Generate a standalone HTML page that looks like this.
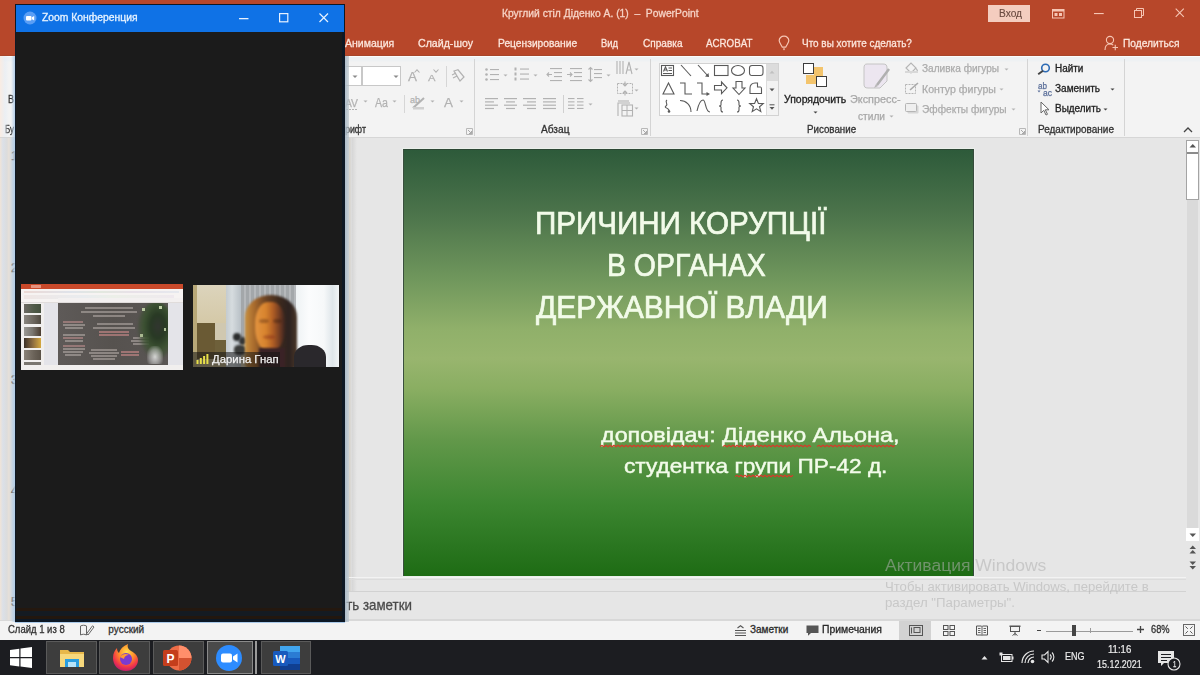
<!DOCTYPE html>
<html><head><meta charset="utf-8"><style>
*{margin:0;padding:0;box-sizing:border-box}
html,body{width:1200px;height:675px;overflow:hidden;background:#e6e6e6;font-family:"Liberation Sans",sans-serif;position:relative}
.a{position:absolute}
.t{position:absolute;white-space:pre;line-height:1;transform-origin:0 0}
svg{position:absolute;overflow:visible}
</style></head><body>
<div class="a" style="left:0;top:0;width:1200px;height:56px;background:#b7472a"></div>
<div class="a" style="left:0;top:55px;width:1200px;height:1px;background:#a8462a"></div>
<div class="a" style="left:0;top:56px;width:1200px;height:81px;background:linear-gradient(#fbfbfb 0,#fbfbfb 1px,#eef1f3 1px,#eef1f3 5px,#f3f3f3 6px)"></div>
<div class="a" style="left:0;top:137px;width:1200px;height:1px;background:#d6d6d6"></div>
<div class="a" style="left:402px;top:148px;width:573px;height:429px;background:#eaefea"></div>
<div class="a" style="left:403px;top:149px;width:571px;height:427px;border-top:1px solid #2c4634;border-right:1px solid #364a3c;border-left:1px solid #3a4e3e;background:linear-gradient(#2d5a3a 0%,#4c744b 15%,#6f965c 30%,#90b06a 42%,#98b56e 49%,#8aae62 56%,#62984a 68%,#3c8630 83%,#2a7620 93%,#1e6c14 100%)"></div>
<div class="a" style="left:349px;top:138px;width:8px;height:453px;background:linear-gradient(90deg,#dcd8d0 0,#d2cec6 1px,#e2e2e2 2px,#d6d6d6 3px,#e6e6e6 8px)"></div>
<div class="a" style="left:345px;top:577px;width:841px;height:1px;background:#f3f3f3"></div>
<div class="a" style="left:345px;top:579px;width:841px;height:1px;background:#dcdcdc"></div>
<div class="a" style="left:0;top:591px;width:1186px;height:1px;background:#d2d2d2"></div>
<div class="a" style="left:0;top:619px;width:1200px;height:2px;background:#d8d8d8"></div>
<div class="a" style="left:0;top:621px;width:1200px;height:19px;background:#f3f3f3"></div>
<div class="a" style="left:0;top:640px;width:1200px;height:35px;background:#1c1d21"></div>
<div class="t" style="left:501.60px;top:8.40px;font-size:11px;color:#f6d3c6;transform:scaleX(0.9358);-webkit-text-stroke:0.3px #f6d3c6;">Круглий стіл Діденко А. (1)  –  PowerPoint</div>
<div class="a" style="left:988px;top:5px;width:42px;height:17px;background:#f4cdbf"></div>
<div class="t" style="left:998.50px;top:8.15px;font-size:11px;color:#6a4a40;transform:scaleX(0.9252);-webkit-text-stroke:0.15px #6a4a40;">Вход</div>
<div class="t" style="left:344.70px;top:37.65px;font-size:11px;color:#fce6dc;transform:scaleX(0.9546);-webkit-text-stroke:0.3px #fce6dc;">Анимация</div>
<div class="t" style="left:418.00px;top:37.65px;font-size:11px;color:#fce6dc;transform:scaleX(0.9643);-webkit-text-stroke:0.3px #fce6dc;">Слайд-шоу</div>
<div class="t" style="left:497.50px;top:37.65px;font-size:11px;color:#fce6dc;transform:scaleX(0.9315);-webkit-text-stroke:0.3px #fce6dc;">Рецензирование</div>
<div class="t" style="left:601.40px;top:37.65px;font-size:11px;color:#fce6dc;transform:scaleX(0.8538);-webkit-text-stroke:0.3px #fce6dc;">Вид</div>
<div class="t" style="left:642.50px;top:37.65px;font-size:11px;color:#fce6dc;transform:scaleX(0.9149);-webkit-text-stroke:0.3px #fce6dc;">Справка</div>
<div class="t" style="left:706.00px;top:37.65px;font-size:11px;color:#fce6dc;transform:scaleX(0.8862);-webkit-text-stroke:0.3px #fce6dc;">ACROBAT</div>
<div class="t" style="left:801.70px;top:37.65px;font-size:11px;color:#fce6dc;transform:scaleX(0.9037);-webkit-text-stroke:0.3px #fce6dc;">Что вы хотите сделать?</div>
<div class="t" style="left:1122.60px;top:37.65px;font-size:11px;color:#fce6dc;transform:scaleX(0.9289);-webkit-text-stroke:0.3px #fce6dc;">Поделиться</div>
<div class="t" style="left:345.00px;top:125.00px;font-size:10px;color:#333;transform:scaleX(0.8842);-webkit-text-stroke:0.3px #333;">рифт</div>
<div class="t" style="left:541.00px;top:125.00px;font-size:10px;color:#333;transform:scaleX(1.0160);-webkit-text-stroke:0.3px #333;">Абзац</div>
<div class="t" style="left:806.60px;top:125.00px;font-size:10px;color:#333;transform:scaleX(0.9752);-webkit-text-stroke:0.3px #333;">Рисование</div>
<div class="t" style="left:1038.00px;top:125.00px;font-size:10px;color:#333;transform:scaleX(0.9974);-webkit-text-stroke:0.3px #333;">Редактирование</div>
<div class="t" style="left:5.00px;top:125.00px;font-size:10px;color:#333;transform:scaleX(0.7930);-webkit-text-stroke:0.3px #333;">Бу</div>
<div class="t" style="left:8.00px;top:95.00px;font-size:10px;color:#333;transform:scaleX(0.9023);-webkit-text-stroke:0.3px #333;">В</div>
<div class="t" style="left:784.20px;top:94.80px;font-size:10px;color:#222;transform:scaleX(1.0454);-webkit-text-stroke:0.3px #222;">Упорядочить</div>
<div class="t" style="left:850.00px;top:94.80px;font-size:10px;color:#a8a8a8;transform:scaleX(1.0849);-webkit-text-stroke:0.25px #a8a8a8;">Экспресс-</div>
<div class="t" style="left:858.00px;top:111.80px;font-size:10px;color:#a8a8a8;transform:scaleX(1.0150);-webkit-text-stroke:0.25px #a8a8a8;">стили</div>
<div class="t" style="left:922.40px;top:64.30px;font-size:10px;color:#ababab;transform:scaleX(1.0098);-webkit-text-stroke:0.25px #ababab;">Заливка фигуры</div>
<div class="t" style="left:922.40px;top:84.50px;font-size:10px;color:#ababab;transform:scaleX(1.0579);-webkit-text-stroke:0.25px #ababab;">Контур фигуры</div>
<div class="t" style="left:922.40px;top:104.50px;font-size:10px;color:#ababab;transform:scaleX(1.0150);-webkit-text-stroke:0.25px #ababab;">Эффекты фигуры</div>
<div class="t" style="left:1054.90px;top:63.90px;font-size:10px;color:#222;transform:scaleX(0.9947);-webkit-text-stroke:0.3px #222;">Найти</div>
<div class="t" style="left:1054.90px;top:84.40px;font-size:10px;color:#222;transform:scaleX(1.0033);-webkit-text-stroke:0.3px #222;">Заменить</div>
<div class="t" style="left:1054.90px;top:103.90px;font-size:10px;color:#222;transform:scaleX(0.9946);-webkit-text-stroke:0.3px #222;">Выделить</div>
<div class="t" style="left:534.50px;top:207.82px;font-size:31.5px;color:#f2fbe9;transform:scaleX(0.9390);-webkit-text-stroke:0.7px #f2fbe9;">ПРИЧИНИ КОРУПЦІЇ</div>
<div class="t" style="left:606.60px;top:249.62px;font-size:31.5px;color:#f2fbe9;transform:scaleX(0.9024);-webkit-text-stroke:0.7px #f2fbe9;">В ОРГАНАХ</div>
<div class="t" style="left:536.30px;top:291.73px;font-size:31.5px;color:#f2fbe9;transform:scaleX(0.9530);-webkit-text-stroke:0.7px #f2fbe9;">ДЕРЖАВНОЇ ВЛАДИ</div>
<div class="t" style="left:600.60px;top:425.25px;font-size:20.3px;color:#f2fbe9;transform:scaleX(1.1518);-webkit-text-stroke:0.45px #f2fbe9;">доповідач: Діденко Альона,</div>
<div class="t" style="left:623.70px;top:455.75px;font-size:20.3px;color:#f2fbe9;transform:scaleX(1.1160);-webkit-text-stroke:0.45px #f2fbe9;">студентка групи ПР-42 д.</div>
<svg style="left:600px;top:444.5px;" width="111" height="3" viewBox="0 0 111 3"><path d="M0 1.5 L2 0.3 L4 1.8 L6 0.3 L8 1.8 L10 0.3 L12 1.8 L14 0.3 L16 1.8 L18 0.3 L20 1.8 L22 0.3 L24 1.8 L26 0.3 L28 1.8 L30 0.3 L32 1.8 L34 0.3 L36 1.8 L38 0.3 L40 1.8 L42 0.3 L44 1.8 L46 0.3 L48 1.8 L50 0.3 L52 1.8 L54 0.3 L56 1.8 L58 0.3 L60 1.8 L62 0.3 L64 1.8 L66 0.3 L68 1.8 L70 0.3 L72 1.8 L74 0.3 L76 1.8 L78 0.3 L80 1.8 L82 0.3 L84 1.8 L86 0.3 L88 1.8 L90 0.3 L92 1.8 L94 0.3 L96 1.8 L98 0.3 L100 1.8 L102 0.3 L104 1.8 L106 0.3 L108 1.8 L110 0.3" fill="none" stroke="#d83a2a" stroke-width="1.1"/></svg>
<svg style="left:723px;top:444.5px;" width="90" height="3" viewBox="0 0 90 3"><path d="M0 1.5 L2 0.3 L4 1.8 L6 0.3 L8 1.8 L10 0.3 L12 1.8 L14 0.3 L16 1.8 L18 0.3 L20 1.8 L22 0.3 L24 1.8 L26 0.3 L28 1.8 L30 0.3 L32 1.8 L34 0.3 L36 1.8 L38 0.3 L40 1.8 L42 0.3 L44 1.8 L46 0.3 L48 1.8 L50 0.3 L52 1.8 L54 0.3 L56 1.8 L58 0.3 L60 1.8 L62 0.3 L64 1.8 L66 0.3 L68 1.8 L70 0.3 L72 1.8 L74 0.3 L76 1.8 L78 0.3 L80 1.8 L82 0.3 L84 1.8 L86 0.3 L88 1.8" fill="none" stroke="#d83a2a" stroke-width="1.1"/></svg>
<svg style="left:817px;top:444.5px;" width="79" height="3" viewBox="0 0 79 3"><path d="M0 1.5 L2 0.3 L4 1.8 L6 0.3 L8 1.8 L10 0.3 L12 1.8 L14 0.3 L16 1.8 L18 0.3 L20 1.8 L22 0.3 L24 1.8 L26 0.3 L28 1.8 L30 0.3 L32 1.8 L34 0.3 L36 1.8 L38 0.3 L40 1.8 L42 0.3 L44 1.8 L46 0.3 L48 1.8 L50 0.3 L52 1.8 L54 0.3 L56 1.8 L58 0.3 L60 1.8 L62 0.3 L64 1.8 L66 0.3 L68 1.8 L70 0.3 L72 1.8 L74 0.3 L76 1.8 L78 0.3" fill="none" stroke="#d83a2a" stroke-width="1.1"/></svg>
<svg style="left:735.4px;top:475px;" width="60.39999999999998" height="3" viewBox="0 0 60.39999999999998 3"><path d="M0 1.5 L2 0.3 L4 1.8 L6 0.3 L8 1.8 L10 0.3 L12 1.8 L14 0.3 L16 1.8 L18 0.3 L20 1.8 L22 0.3 L24 1.8 L26 0.3 L28 1.8 L30 0.3 L32 1.8 L34 0.3 L36 1.8 L38 0.3 L40 1.8 L42 0.3 L44 1.8 L46 0.3 L48 1.8 L50 0.3 L52 1.8 L54 0.3 L56 1.8 L58 0.3" fill="none" stroke="#d83a2a" stroke-width="1.1"/></svg>
<div class="t" style="left:191.50px;top:597.89px;font-size:14.6px;color:#4a4a4a;transform:scaleX(0.9124);-webkit-text-stroke:0.3px #4a4a4a;">Щелкните, чтобы добавить заметки</div>
<div class="t" style="left:885.00px;top:557.70px;font-size:16px;color:rgba(175,175,175,0.55);transform:scaleX(1.0940);">Активация Windows</div>
<div class="t" style="left:885.00px;top:580.54px;font-size:12.3px;color:rgba(175,175,175,0.55);transform:scaleX(1.0661);">Чтобы активировать Windows, перейдите в</div>
<div class="t" style="left:885.00px;top:597.04px;font-size:12.3px;color:rgba(175,175,175,0.55);transform:scaleX(1.0757);">раздел &quot;Параметры&quot;.</div>
<div class="t" style="left:7.50px;top:624.80px;font-size:10px;color:#333;transform:scaleX(0.9505);-webkit-text-stroke:0.3px #333;">Слайд 1 из 8</div>
<div class="t" style="left:108.30px;top:624.80px;font-size:10px;color:#333;-webkit-text-stroke:0.3px #333;">русский</div>
<div class="t" style="left:750.00px;top:624.80px;font-size:10px;color:#2a2a2a;-webkit-text-stroke:0.3px #2a2a2a;">Заметки</div>
<div class="t" style="left:821.70px;top:624.80px;font-size:10px;color:#2a2a2a;transform:scaleX(1.0390);-webkit-text-stroke:0.3px #2a2a2a;">Примечания</div>
<div class="t" style="left:1151.40px;top:624.80px;font-size:10px;color:#333;transform:scaleX(0.9300);-webkit-text-stroke:0.3px #333;">68%</div>
<div class="t" style="left:1064.50px;top:651.06px;font-size:11.4px;color:#ececec;transform:scaleX(0.7901);-webkit-text-stroke:0.2px #ececec;">ENG</div>
<div class="t" style="left:1107.60px;top:643.55px;font-size:11px;color:#ececec;transform:scaleX(0.8717);-webkit-text-stroke:0.2px #ececec;">11:16</div>
<div class="t" style="left:1097.00px;top:658.91px;font-size:11.4px;color:#ececec;transform:scaleX(0.7852);-webkit-text-stroke:0.2px #ececec;">15.12.2021</div>
<div class="a" style="left:0;top:138px;width:15px;height:482px;background:linear-gradient(90deg,#f0e4d8 0,#dbe0e8 3px,#dcdcdc 7px,#e8e0d8 9px,#dcdcdc 10px,#d0d8e0 12px)"></div>
<div class="a" style="left:0;top:56px;width:15px;height:81px;background:linear-gradient(90deg,rgba(250,235,225,0.9) 0,rgba(230,236,244,0.6) 5px,rgba(243,243,243,0) 9px)"></div>
<div class="t" style="left:11.00px;top:149.80px;font-size:12px;color:#666;-webkit-text-stroke:0.25px #666;">1</div>
<div class="t" style="left:11.00px;top:261.80px;font-size:12px;color:#666;-webkit-text-stroke:0.25px #666;">2</div>
<div class="t" style="left:11.00px;top:373.80px;font-size:12px;color:#666;-webkit-text-stroke:0.25px #666;">3</div>
<div class="t" style="left:11.00px;top:484.80px;font-size:12px;color:#666;-webkit-text-stroke:0.25px #666;">4</div>
<div class="t" style="left:11.00px;top:595.80px;font-size:12px;color:#666;-webkit-text-stroke:0.25px #666;">5</div>
<svg style="left:1052px;top:9px;" width="13" height="10" viewBox="0 0 13 10"><rect x="0.5" y="0.5" width="11.5" height="8.5" fill="none" stroke="#f6c6b4" stroke-width="1"/><rect x="0.5" y="0.5" width="11.5" height="2" fill="#f6c6b4"/><rect x="2.5" y="4" width="3" height="3" fill="#f6c6b4"/><rect x="7" y="4" width="3" height="3" fill="#f6c6b4"/></svg>
<svg style="left:1094px;top:13px;" width="10" height="2" viewBox="0 0 10 2"><rect x="0" y="0" width="9.7" height="1.1" fill="#f6c6b4"/></svg>
<svg style="left:1134px;top:8px;" width="11" height="11" viewBox="0 0 11 11"><rect x="0.5" y="2.5" width="7" height="7" fill="none" stroke="#f6c6b4" stroke-width="1"/><path d="M2.5 2.5 V0.5 H9.5 V7.5 H7.5" fill="none" stroke="#f6c6b4" stroke-width="1"/></svg>
<svg style="left:1175px;top:8px;" width="10" height="10" viewBox="0 0 10 10"><path d="M0.7 0.7 L8.8 8.8 M8.8 0.7 L0.7 8.8" stroke="#f6c6b4" stroke-width="1.1"/></svg>
<svg style="left:778px;top:35px;" width="12" height="16" viewBox="0 0 12 16"><path d="M6 1.2 C3.2 1.2 1.2 3.2 1.2 5.6 C1.2 7.6 2.6 9 3.8 11.2 L4.3 12.2 H7.7 L8.2 11.2 C9.4 9 10.8 7.6 10.8 5.6 C10.8 3.2 8.8 1.2 6 1.2Z" fill="none" stroke="#f6c6b4" stroke-width="1.2"/><circle cx="6" cy="14.2" r="1.1" fill="#f6c6b4" opacity="0.7"/></svg>
<svg style="left:1104px;top:35px;" width="15" height="16" viewBox="0 0 15 16"><circle cx="6" cy="5" r="3.6" fill="none" stroke="#f6c6b4" stroke-width="1.1"/><path d="M1 15 C1 11 3 9 6 9 C7.5 9 8.5 9.5 9.2 10.2" fill="none" stroke="#f6c6b4" stroke-width="1.1"/><path d="M8.5 12.5 H14 M11.25 9.8 V15.2" stroke="#f6c6b4" stroke-width="1.1"/></svg>
<div class="a" style="left:338px;top:66px;width:24px;height:20px;background:#fff;border:1px solid #c8c8c8;border-left:none"></div>
<div class="a" style="left:362px;top:66px;width:39px;height:20px;background:#fff;border:1px solid #c8c8c8"></div>
<svg style="left:352px;top:75px;" width="7" height="4" viewBox="0 0 7 4"><path d="M0.5 0.5 H5.5 L3 3Z" fill="#8a8a8a"/></svg>
<svg style="left:393px;top:75px;" width="7" height="4" viewBox="0 0 7 4"><path d="M0.5 0.5 H5.5 L3 3Z" fill="#8a8a8a"/></svg>
<div class="t" style="left:408.00px;top:70.80px;font-size:12px;color:#b2b2b2;transform:scaleX(1.1194);-webkit-text-stroke:0.25px #b2b2b2;">A</div>
<svg style="left:414px;top:69px;" width="6" height="4" viewBox="0 0 6 4"><path d="M0.5 3.5 L3 0.8 L5.5 3.5" fill="none" stroke="#b2b2b2" stroke-width="1.1"/></svg>
<div class="t" style="left:428.00px;top:72.92px;font-size:9.5px;color:#b2b2b2;transform:scaleX(1.1783);-webkit-text-stroke:0.25px #b2b2b2;">A</div>
<svg style="left:433px;top:69px;" width="6" height="4" viewBox="0 0 6 4"><path d="M0.5 0.5 L3 3.2 L5.5 0.5" fill="none" stroke="#b2b2b2" stroke-width="1.1"/></svg>
<div class="a" style="left:446px;top:66px;width:1px;height:21px;background:#d6d6d6"></div>
<svg style="left:451px;top:69px;" width="15" height="14" viewBox="0 0 15 14"><path d="M3 2 L7 0.8 L13 8 L9 12 Z" fill="none" stroke="#b2b2b2" stroke-width="1.2"/><path d="M1 6 L5 4 M2 9 L6 7" stroke="#b2b2b2" stroke-width="1.2"/></svg>
<div class="t" style="left:345.00px;top:97.65px;font-size:11px;color:#b2b2b2;transform:scaleX(0.9380);-webkit-text-stroke:0.25px #b2b2b2;">AV</div>
<svg style="left:346px;top:108px;" width="12" height="3" viewBox="0 0 12 3"><path d="M0 1.5 H11" stroke="#b2b2b2" stroke-width="1" stroke-dasharray="2 1"/></svg>
<svg style="left:363px;top:100px;" width="6" height="4" viewBox="0 0 6 4"><path d="M0.5 0.5 H4.5 L2.5 2.5Z" fill="#b2b2b2"/></svg>
<div class="t" style="left:375.00px;top:96.80px;font-size:12px;color:#b2b2b2;transform:scaleX(0.8844);-webkit-text-stroke:0.25px #b2b2b2;">Aa</div>
<svg style="left:392px;top:100px;" width="6" height="4" viewBox="0 0 6 4"><path d="M0.5 0.5 H4.5 L2.5 2.5Z" fill="#b2b2b2"/></svg>
<div class="a" style="left:404px;top:95px;width:1px;height:18px;background:#d6d6d6"></div>
<div class="t" style="left:410.00px;top:96.35px;font-size:9px;color:#b2b2b2;-webkit-text-stroke:0.25px #b2b2b2;">ab</div>
<svg style="left:410px;top:96px;" width="16" height="14" viewBox="0 0 16 14"><path d="M3 12 L14 2" stroke="#b2b2b2" stroke-width="2"/><rect x="3" y="11" width="11" height="2.5" fill="#d0d0d0"/></svg>
<svg style="left:430px;top:100px;" width="6" height="4" viewBox="0 0 6 4"><path d="M0.5 0.5 H4.5 L2.5 2.5Z" fill="#b2b2b2"/></svg>
<div class="t" style="left:444.00px;top:95.95px;font-size:13px;color:#b2b2b2;transform:scaleX(1.0333);-webkit-text-stroke:0.25px #b2b2b2;">A</div>
<svg style="left:459px;top:100px;" width="6" height="4" viewBox="0 0 6 4"><path d="M0.5 0.5 H4.5 L2.5 2.5Z" fill="#b2b2b2"/></svg>
<svg style="left:466px;top:128px;" width="7" height="7" viewBox="0 0 7 7"><path d="M0.5 6.5 V0.5 H6.5 V6.5Z" fill="none" stroke="#b8b8b8" stroke-width="1"/><path d="M2 2 L5.5 5.5 M5.5 3 V5.5 H3" fill="none" stroke="#a0a0a0" stroke-width="0.9"/></svg>
<svg style="left:641px;top:128px;" width="7" height="7" viewBox="0 0 7 7"><path d="M0.5 6.5 V0.5 H6.5 V6.5Z" fill="none" stroke="#b8b8b8" stroke-width="1"/><path d="M2 2 L5.5 5.5 M5.5 3 V5.5 H3" fill="none" stroke="#a0a0a0" stroke-width="0.9"/></svg>
<svg style="left:1019px;top:128px;" width="7" height="7" viewBox="0 0 7 7"><path d="M0.5 6.5 V0.5 H6.5 V6.5Z" fill="none" stroke="#b8b8b8" stroke-width="1"/><path d="M2 2 L5.5 5.5 M5.5 3 V5.5 H3" fill="none" stroke="#a0a0a0" stroke-width="0.9"/></svg>
<div class="a" style="left:474px;top:59px;width:1px;height:77px;background:#d4d4d4"></div>
<div class="a" style="left:650px;top:59px;width:1px;height:77px;background:#d4d4d4"></div>
<div class="a" style="left:1027px;top:59px;width:1px;height:77px;background:#d4d4d4"></div>
<div class="a" style="left:1124px;top:59px;width:1px;height:77px;background:#d4d4d4"></div>
<svg style="left:485px;top:68px;" width="14" height="14" viewBox="0 0 14 14"><circle cx="1.5" cy="1.5" r="1.3" fill="#b2b2b2"/><rect x="5" y="1" width="9" height="1.1" fill="#b2b2b2"/><circle cx="1.5" cy="6.5" r="1.3" fill="#b2b2b2"/><rect x="5" y="6" width="9" height="1.1" fill="#b2b2b2"/><circle cx="1.5" cy="11.5" r="1.3" fill="#b2b2b2"/><rect x="5" y="11" width="9" height="1.1" fill="#b2b2b2"/></svg>
<svg style="left:503px;top:74px;" width="6" height="4" viewBox="0 0 6 4"><path d="M0.5 0.5 H4.5 L2.5 2.5Z" fill="#b2b2b2"/></svg>
<svg style="left:514px;top:67px;" width="15" height="16" viewBox="0 0 15 16"><rect x="0.5" y="0.5" width="2" height="3" fill="#b2b2b2"/><rect x="6" y="1.5" width="9" height="1.1" fill="#b2b2b2"/><rect x="0.5" y="5.5" width="2" height="3" fill="#b2b2b2"/><rect x="6" y="6.5" width="9" height="1.1" fill="#b2b2b2"/><rect x="0.5" y="10.5" width="2" height="3" fill="#b2b2b2"/><rect x="6" y="11.5" width="9" height="1.1" fill="#b2b2b2"/></svg>
<svg style="left:533px;top:74px;" width="6" height="4" viewBox="0 0 6 4"><path d="M0.5 0.5 H4.5 L2.5 2.5Z" fill="#b2b2b2"/></svg>
<svg style="left:546px;top:68px;" width="16" height="13" viewBox="0 0 16 13"><rect x="4" y="0" width="12" height="1.1" fill="#b2b2b2"/><rect x="8" y="4" width="8" height="1.1" fill="#b2b2b2"/><rect x="8" y="8" width="8" height="1.1" fill="#b2b2b2"/><rect x="4" y="12" width="12" height="1.1" fill="#b2b2b2"/><path d="M6 6.5 H1 M3 4.5 L1 6.5 L3 8.5" fill="none" stroke="#b2b2b2" stroke-width="1.1"/></svg>
<svg style="left:566px;top:68px;" width="17" height="13" viewBox="0 0 17 13"><rect x="4" y="0" width="12" height="1.1" fill="#b2b2b2"/><rect x="8" y="4" width="8" height="1.1" fill="#b2b2b2"/><rect x="8" y="8" width="8" height="1.1" fill="#b2b2b2"/><rect x="4" y="12" width="12" height="1.1" fill="#b2b2b2"/><path d="M1 6.5 H6 M4 4.5 L6 6.5 L4 8.5" fill="none" stroke="#b2b2b2" stroke-width="1.1"/></svg>
<svg style="left:588px;top:67px;" width="14" height="15" viewBox="0 0 14 15"><path d="M2.5 0.5 V14.5 M0.5 2.5 L2.5 0.5 L4.5 2.5 M0.5 12.5 L2.5 14.5 L4.5 12.5" fill="none" stroke="#b2b2b2" stroke-width="1.1"/><rect x="6" y="2" width="8" height="1.1" fill="#b2b2b2"/><rect x="6" y="6" width="8" height="1.1" fill="#b2b2b2"/><rect x="6" y="10" width="8" height="1.1" fill="#b2b2b2"/></svg>
<svg style="left:606px;top:74px;" width="6" height="4" viewBox="0 0 6 4"><path d="M0.5 0.5 H4.5 L2.5 2.5Z" fill="#b2b2b2"/></svg>
<svg style="left:616px;top:60px;" width="17" height="15" viewBox="0 0 17 15"><path d="M1 1 V14 M4 1 V14 M7 1 V14" stroke="#b2b2b2" stroke-width="1.1"/><path d="M10 14 L13 2 L16 14 M11 10 H15" fill="none" stroke="#b2b2b2" stroke-width="1.1"/></svg>
<svg style="left:634px;top:68px;" width="6" height="4" viewBox="0 0 6 4"><path d="M0.5 0.5 H4.5 L2.5 2.5Z" fill="#b2b2b2"/></svg>
<svg style="left:617px;top:81px;" width="16" height="15" viewBox="0 0 16 15"><rect x="0.5" y="2.5" width="15" height="10" fill="none" stroke="#b2b2b2" stroke-width="1" stroke-dasharray="2 1"/><path d="M8 0.5 V5 M6 3 L8 5 L10 3 M8 14.5 V10 M6 12 L8 10 L10 12" fill="none" stroke="#b2b2b2" stroke-width="1.1"/></svg>
<svg style="left:634px;top:89px;" width="6" height="4" viewBox="0 0 6 4"><path d="M0.5 0.5 H4.5 L2.5 2.5Z" fill="#b2b2b2"/></svg>
<svg style="left:617px;top:100px;" width="16" height="17" viewBox="0 0 16 17"><rect x="5" y="5" width="10.5" height="11" fill="none" stroke="#b2b2b2" stroke-width="1.1"/><path d="M5 10.5 H15.5 M10 5 V16" stroke="#b2b2b2" stroke-width="1"/><path d="M1 16 V3 H13" fill="none" stroke="#b2b2b2" stroke-width="1.1"/><path d="M1 1 H12" stroke="#b2b2b2" stroke-width="1.1"/></svg>
<svg style="left:634px;top:107px;" width="6" height="4" viewBox="0 0 6 4"><path d="M0.5 0.5 H4.5 L2.5 2.5Z" fill="#b2b2b2"/></svg>
<svg style="left:485px;top:98px;" width="13" height="13.2" viewBox="0 0 13 13.2"><rect x="0" y="0.0" width="13" height="1.2" fill="#b2b2b2"/><rect x="0" y="3.3" width="9" height="1.2" fill="#b2b2b2"/><rect x="0" y="6.6" width="13" height="1.2" fill="#b2b2b2"/><rect x="0" y="9.899999999999999" width="9" height="1.2" fill="#b2b2b2"/></svg>
<svg style="left:504px;top:98px;" width="13" height="13.2" viewBox="0 0 13 13.2"><rect x="0" y="0.0" width="13" height="1.2" fill="#b2b2b2"/><rect x="2" y="3.3" width="9" height="1.2" fill="#b2b2b2"/><rect x="0" y="6.6" width="13" height="1.2" fill="#b2b2b2"/><rect x="2" y="9.899999999999999" width="9" height="1.2" fill="#b2b2b2"/></svg>
<svg style="left:523px;top:98px;" width="13" height="13.2" viewBox="0 0 13 13.2"><rect x="0" y="0.0" width="13" height="1.2" fill="#b2b2b2"/><rect x="4" y="3.3" width="9" height="1.2" fill="#b2b2b2"/><rect x="0" y="6.6" width="13" height="1.2" fill="#b2b2b2"/><rect x="4" y="9.899999999999999" width="9" height="1.2" fill="#b2b2b2"/></svg>
<svg style="left:543px;top:98px;" width="13" height="13.2" viewBox="0 0 13 13.2"><rect x="0" y="0.0" width="13" height="1.2" fill="#b2b2b2"/><rect x="0" y="3.3" width="13" height="1.2" fill="#b2b2b2"/><rect x="0" y="6.6" width="13" height="1.2" fill="#b2b2b2"/><rect x="0" y="9.899999999999999" width="13" height="1.2" fill="#b2b2b2"/></svg>
<div class="a" style="left:563px;top:95px;width:1px;height:18px;background:#d0d0d0"></div>
<svg style="left:568px;top:98px;" width="16" height="12" viewBox="0 0 16 12"><rect x="0" y="0.0" width="6.5" height="1.1" fill="#b2b2b2"/><rect x="9" y="0.0" width="6.5" height="1.1" fill="#b2b2b2"/><rect x="0" y="3.3" width="6.5" height="1.1" fill="#b2b2b2"/><rect x="9" y="3.3" width="6.5" height="1.1" fill="#b2b2b2"/><rect x="0" y="6.6" width="6.5" height="1.1" fill="#b2b2b2"/><rect x="9" y="6.6" width="6.5" height="1.1" fill="#b2b2b2"/><rect x="0" y="9.899999999999999" width="6.5" height="1.1" fill="#b2b2b2"/><rect x="9" y="9.899999999999999" width="6.5" height="1.1" fill="#b2b2b2"/></svg>
<svg style="left:588px;top:103px;" width="6" height="4" viewBox="0 0 6 4"><path d="M0.5 0.5 H4.5 L2.5 2.5Z" fill="#b2b2b2"/></svg>
<div class="a" style="left:659px;top:63px;width:120px;height:53px;background:#fff;border:1px solid #d2d2d2"></div>
<div class="a" style="left:766px;top:64px;width:12px;height:51px;background:#f3f3f3;border-left:1px solid #dcdcdc"></div>
<div class="a" style="left:767px;top:64px;width:11px;height:17px;background:#dcdcdc"></div>
<svg style="left:769px;top:70px;" width="7" height="4" viewBox="0 0 7 4"><path d="M0.5 3.5 H5.5 L3 0.8Z" fill="#c0c0c0"/></svg>
<svg style="left:769px;top:88px;" width="7" height="4" viewBox="0 0 7 4"><path d="M0.5 0.5 H5.5 L3 3.2Z" fill="#555"/></svg>
<svg style="left:769px;top:104px;" width="7" height="7" viewBox="0 0 7 7"><path d="M0.5 0.8 H5.5" stroke="#555" stroke-width="1"/><path d="M0.5 3 H5.5 L3 5.7Z" fill="#555"/></svg>
<svg style="left:661px;top:65px;" width="14" height="12" viewBox="0 0 14 12"><rect x="0.5" y="0.5" width="12" height="10" stroke-width="1.1" fill="none" stroke="#595959"/><path d="M2.5 6.5 L4.5 1.8 L6.5 6.5 M3.2 5 H5.8 M7.5 3 H11 M7.5 5.5 H11 M2 8.5 H11" stroke-width="1.1" fill="none" stroke="#595959"/></svg>
<svg style="left:680px;top:64px;" width="12" height="13" viewBox="0 0 12 13"><path d="M1 1 L11 12" stroke-width="1.1" fill="none" stroke="#595959"/></svg>
<svg style="left:697px;top:64px;" width="13" height="14" viewBox="0 0 13 14"><path d="M1 1 L11 12" stroke-width="1.1" fill="none" stroke="#595959"/><path d="M12 13 L8 12.5 L11.5 9Z" fill="#595959"/></svg>
<svg style="left:714px;top:65px;" width="15" height="12" viewBox="0 0 15 12"><rect x="0.5" y="0.5" width="13.5" height="10" stroke-width="1.1" fill="none" stroke="#595959"/></svg>
<svg style="left:731px;top:65px;" width="15" height="12" viewBox="0 0 15 12"><ellipse cx="7" cy="5.5" rx="6.5" ry="5" stroke-width="1.1" fill="none" stroke="#595959"/></svg>
<svg style="left:749px;top:65px;" width="15" height="12" viewBox="0 0 15 12"><rect x="0.5" y="0.5" width="13.5" height="10" rx="2.5" stroke-width="1.1" fill="none" stroke="#595959"/></svg>
<svg style="left:662px;top:82px;" width="13" height="13" viewBox="0 0 13 13"><path d="M6.5 1 L12 12 H1Z" stroke-width="1.1" fill="none" stroke="#595959"/></svg>
<svg style="left:679px;top:82px;" width="14" height="13" viewBox="0 0 14 13"><path d="M1 1 H6 V12 H13" stroke-width="1.1" fill="none" stroke="#595959"/></svg>
<svg style="left:696px;top:82px;" width="15" height="14" viewBox="0 0 15 14"><path d="M1 1 H6 V12 H12" stroke-width="1.1" fill="none" stroke="#595959"/><path d="M14 12 L10.5 10 V14Z" fill="#595959"/></svg>
<svg style="left:714px;top:81px;" width="14" height="14" viewBox="0 0 14 14"><path d="M0.5 4.5 H7.5 V1 L13 6.8 L7.5 12.6 V9 H0.5Z" stroke-width="1.1" fill="none" stroke="#595959"/></svg>
<svg style="left:732px;top:81px;" width="14" height="15" viewBox="0 0 14 15"><path d="M4 0.5 H10 V7 H13 L7 13.5 L1 7 H4Z" stroke-width="1.1" fill="none" stroke="#595959"/></svg>
<svg style="left:749px;top:82px;" width="14" height="13" viewBox="0 0 14 13"><path d="M1 11.5 V6 C1 3 3 1 6 1 H8.5 V5 H11.5 C12.5 5 12.5 6 12.5 7 V11.5Z" stroke-width="1.1" fill="none" stroke="#595959"/></svg>
<svg style="left:663px;top:99px;" width="10" height="15" viewBox="0 0 10 15"><path d="M4 1 C1 3 6 5 3 7 C0 9 7 9 6 12" stroke-width="1.1" fill="none" stroke="#595959"/><circle cx="6" cy="12.5" r="1.3" fill="#595959"/></svg>
<svg style="left:679px;top:99px;" width="14" height="14" viewBox="0 0 14 14"><path d="M1 1.5 C7 1.5 12 6 12 13" stroke-width="1.1" fill="none" stroke="#595959"/></svg>
<svg style="left:696px;top:99px;" width="15" height="14" viewBox="0 0 15 14"><path d="M1 12 C3 3 5 1 7 1 C10 1 9 13 14 13" stroke-width="1.1" fill="none" stroke="#595959"/></svg>
<svg style="left:718px;top:99px;" width="7" height="14" viewBox="0 0 7 14"><path d="M5 1 C3 1 3 2 3 4 V6 C3 7 2 7 1 7 C2 7 3 7 3 8 V11 C3 12.5 3.5 13 5 13" stroke-width="1.1" fill="none" stroke="#595959"/></svg>
<svg style="left:735px;top:99px;" width="7" height="14" viewBox="0 0 7 14"><path d="M2 1 C4 1 4 2 4 4 V6 C4 7 5 7 6 7 C5 7 4 7 4 8 V11 C4 12.5 3.5 13 2 13" stroke-width="1.1" fill="none" stroke="#595959"/></svg>
<svg style="left:749px;top:98px;" width="15" height="15" viewBox="0 0 15 15"><path d="M7.5 0.8 L9.4 5.4 L14.3 5.6 L10.5 8.7 L11.8 13.6 L7.5 10.8 L3.2 13.6 L4.5 8.7 L0.7 5.6 L5.6 5.4Z" stroke-width="1.1" fill="none" stroke="#595959"/></svg>
<svg style="left:802px;top:62px;" width="26" height="26" viewBox="0 0 26 26"><rect x="12" y="5" width="9" height="9" fill="#f3c46c"/><rect x="4" y="13" width="10" height="9" fill="#f3c46c"/><rect x="1.5" y="1.5" width="10" height="10" fill="#fff" stroke="#3c3c3c" stroke-width="1"/><rect x="14.5" y="14.5" width="10" height="10" fill="#fff" stroke="#3c3c3c" stroke-width="1"/></svg>
<svg style="left:813px;top:111px;" width="6" height="4" viewBox="0 0 6 4"><path d="M0.5 0.5 H4.5 L2.5 2.5Z" fill="#444"/></svg>
<svg style="left:863px;top:63px;" width="28" height="27" viewBox="0 0 28 27"><path d="M4 1 H20 C23 1 24 2 24 5 V18 L17 25 H5 C2 25 1 24 1 21 V5 C1 2 2 1 4 1Z" fill="#ece6f0" stroke="#c4c4c4" stroke-width="1"/><path d="M26 6 L14 22" stroke="#b0b0b0" stroke-width="2.5"/><path d="M13 21 L11 25 L15 23Z" fill="#b8b8b8"/></svg>
<svg style="left:889px;top:115px;" width="6" height="4" viewBox="0 0 6 4"><path d="M0.5 0.5 H4.5 L2.5 2.5Z" fill="#b0b0b0"/></svg>
<svg style="left:905px;top:62px;" width="14" height="11" viewBox="0 0 14 11"><path d="M1 6 L6 1 L11 6 L6 11Z" fill="none" stroke="#b5b5b5" stroke-width="1.1"/><path d="M10 6 C12 7 13 9 12 10" stroke="#b5b5b5" stroke-width="1.2" fill="none"/><rect x="0" y="9" width="13" height="2" fill="#d8d8d8"/></svg>
<svg style="left:1004px;top:68px;" width="6" height="4" viewBox="0 0 6 4"><path d="M0.5 0.5 H4.5 L2.5 2.5Z" fill="#b5b5b5"/></svg>
<svg style="left:905px;top:82px;" width="14" height="12" viewBox="0 0 14 12"><rect x="0.5" y="2.5" width="10" height="9" fill="none" stroke="#b5b5b5" stroke-width="1" stroke-dasharray="2 1"/><path d="M5 8 L13 1" stroke="#aaa" stroke-width="1.6"/></svg>
<svg style="left:999px;top:88px;" width="6" height="4" viewBox="0 0 6 4"><path d="M0.5 0.5 H4.5 L2.5 2.5Z" fill="#b5b5b5"/></svg>
<svg style="left:905px;top:103px;" width="15" height="11" viewBox="0 0 15 11"><rect x="2.5" y="2.5" width="11" height="8" rx="1" fill="#d6d6d6"/><rect x="0.5" y="0.5" width="11" height="8" rx="1" fill="#efefef" stroke="#b5b5b5" stroke-width="1"/></svg>
<svg style="left:1011px;top:108px;" width="6" height="4" viewBox="0 0 6 4"><path d="M0.5 0.5 H4.5 L2.5 2.5Z" fill="#b5b5b5"/></svg>
<svg style="left:1037px;top:63px;" width="14" height="12" viewBox="0 0 14 12"><circle cx="8.5" cy="5" r="3.8" fill="none" stroke="#2d6bb5" stroke-width="1.6"/><path d="M6 7.8 L1.2 11.2" stroke="#444" stroke-width="2"/></svg>
<div class="t" style="left:1038.00px;top:82.35px;font-size:9px;color:#5a6e99;transform:scaleX(0.9009);-webkit-text-stroke:0.25px #5a6e99;">ab</div>
<div class="t" style="left:1043.00px;top:88.85px;font-size:9px;color:#5a6e99;transform:scaleX(0.9479);-webkit-text-stroke:0.25px #5a6e99;">ac</div>
<svg style="left:1037px;top:90px;" width="4" height="4" viewBox="0 0 4 4"><path d="M0.5 0.5 H3.5 L2 2.5Z" fill="#5a6e99"/></svg>
<svg style="left:1110px;top:88px;" width="6" height="4" viewBox="0 0 6 4"><path d="M0.5 0.5 H4.5 L2.5 2.5Z" fill="#444"/></svg>
<svg style="left:1040px;top:101px;" width="10" height="15" viewBox="0 0 10 15"><path d="M1 1 V12 L3.8 9.3 L6 14 L7.5 13.3 L5.3 8.8 H9Z" fill="#fff" stroke="#666" stroke-width="1"/></svg>
<svg style="left:1103px;top:108px;" width="6" height="4" viewBox="0 0 6 4"><path d="M0.5 0.5 H4.5 L2.5 2.5Z" fill="#444"/></svg>
<svg style="left:1183px;top:127px;" width="10" height="6" viewBox="0 0 10 6"><path d="M1 5 L5 1 L9 5" fill="none" stroke="#444" stroke-width="1.3"/></svg>
<div class="a" style="left:1186px;top:139px;width:14px;height:452px;background:#e6e6e6"></div>
<div class="a" style="left:1186px;top:140px;width:13px;height:60px;background:#fff;border:1px solid #a4a4a4"></div>
<div class="a" style="left:1187px;top:152px;width:11px;height:1.5px;background:#8c8c8c"></div>
<svg style="left:1189px;top:143px;" width="8" height="5" viewBox="0 0 8 5"><path d="M0.5 4.5 H7 L3.75 1Z" fill="#555"/></svg>
<div class="a" style="left:1187px;top:200px;width:11px;height:328px;background:#dadada"></div>
<div class="a" style="left:1186px;top:528px;width:13px;height:13px;background:#fff"></div>
<svg style="left:1189px;top:533px;" width="8" height="5" viewBox="0 0 8 5"><path d="M0.5 0.5 H7 L3.75 4Z" fill="#555"/></svg>
<svg style="left:1189px;top:545px;" width="8" height="9" viewBox="0 0 8 9"><path d="M0.5 4 H7 L3.75 0.5Z M0.5 8.5 H7 L3.75 5Z" fill="#555"/></svg>
<svg style="left:1189px;top:561px;" width="8" height="9" viewBox="0 0 8 9"><path d="M0.5 0.5 H7 L3.75 4Z M0.5 5 H7 L3.75 8.5Z" fill="#555"/></svg>
<svg style="left:80px;top:625px;" width="15" height="11" viewBox="0 0 15 11"><path d="M0.5 1 C2.5 0 4.5 0 6.5 1 V10 C4.5 9 2.5 9 0.5 10Z" fill="none" stroke="#666" stroke-width="1"/><path d="M6.5 1 V10" stroke="#666"/><path d="M8 10 L14 2 L12.5 0.8 L6.8 8.5Z" fill="#f3f3f3" stroke="#666" stroke-width="1"/></svg>
<svg style="left:735px;top:625px;" width="11" height="11" viewBox="0 0 11 11"><path d="M2.5 3 L5.5 0.8 L8.5 3" fill="none" stroke="#555" stroke-width="1.1"/><path d="M0 5.5 H11 M0 8 H11 M0 10.5 H11" stroke="#555" stroke-width="1.1"/></svg>
<svg style="left:806px;top:625px;" width="13" height="11" viewBox="0 0 13 11"><path d="M0.5 0.5 H12.5 V8 H5 L2 10.8 V8 H0.5Z" fill="#555"/></svg>
<div class="a" style="left:899px;top:621px;width:32px;height:19px;background:#d2d2d2"></div>
<svg style="left:909px;top:625px;" width="14" height="11" viewBox="0 0 14 11"><rect x="0.5" y="0.5" width="13" height="10" fill="none" stroke="#555" stroke-width="1"/><rect x="5" y="2.5" width="6" height="5" fill="none" stroke="#555" stroke-width="1"/><path d="M2.5 8.5 V2.5" stroke="#555"/></svg>
<svg style="left:943px;top:625px;" width="12" height="11" viewBox="0 0 12 11"><rect x="0.5" y="0.5" width="4.5" height="4" fill="none" stroke="#555"/><rect x="7" y="0.5" width="4.5" height="4" fill="none" stroke="#555"/><rect x="0.5" y="6.5" width="4.5" height="4" fill="none" stroke="#555"/><rect x="7" y="6.5" width="4.5" height="4" fill="none" stroke="#555"/></svg>
<svg style="left:976px;top:625px;" width="12" height="11" viewBox="0 0 12 11"><path d="M0.5 1 H5.5 L6 1.5 L6.5 1 H11.5 V10 H6.5 L6 10.5 L5.5 10 H0.5Z" fill="none" stroke="#555"/><path d="M6 1.5 V10 M2 3.5 H4.5 M2 5.5 H4.5 M2 7.5 H4.5 M7.5 3.5 H10 M7.5 5.5 H10 M7.5 7.5 H10" stroke="#555" stroke-width="0.9"/></svg>
<svg style="left:1009px;top:625px;" width="12" height="11" viewBox="0 0 12 11"><rect x="0.5" y="0.5" width="11" height="1.5" fill="#555"/><rect x="1.5" y="1.5" width="9" height="5" fill="none" stroke="#555"/><path d="M6 6.5 V10.5 M3.5 10.5 L6 8.5 L8.5 10.5" fill="none" stroke="#555" stroke-width="1"/></svg>
<div class="a" style="left:1037px;top:630px;width:4px;height:1.3px;background:#444"></div>
<div class="a" style="left:1046px;top:630.5px;width:87px;height:1px;background:#9a9a9a"></div>
<div class="a" style="left:1090px;top:628px;width:1px;height:5px;background:#9a9a9a"></div>
<div class="a" style="left:1072px;top:625px;width:4px;height:11px;background:#444"></div>
<svg style="left:1137px;top:626px;" width="7" height="7" viewBox="0 0 7 7"><path d="M3.5 0 V7 M0 3.5 H7" stroke="#444" stroke-width="1.3"/></svg>
<svg style="left:1183px;top:624px;" width="12" height="12" viewBox="0 0 12 12"><rect x="0.5" y="0.5" width="11" height="11" fill="none" stroke="#666" stroke-width="1"/><path d="M2.5 2.5 L4.8 4.8 M9.5 2.5 L7.2 4.8 M2.5 9.5 L4.8 7.2 M9.5 9.5 L7.2 7.2" stroke="#555" stroke-width="1"/></svg>
<svg style="left:10px;top:647px;" width="22" height="21" viewBox="0 0 22 21"><path d="M0 3 L9.3 1.7 V10 H0Z M10.5 1.5 L22 0 V10 H10.5Z M0 11.2 H9.3 V19.5 L0 18.2Z M10.5 11.2 H22 V21 L10.5 19.6Z" fill="#fff"/></svg>
<div class="a" style="left:46px;top:641px;width:51px;height:33px;background:#3d3d3d;border:1px solid #5a5a5a"></div>
<div class="a" style="left:99px;top:641px;width:51px;height:33px;background:#3d3d3d;border:1px solid #5a5a5a"></div>
<div class="a" style="left:153px;top:641px;width:51px;height:33px;background:#3d3d3d;border:1px solid #5a5a5a"></div>
<div class="a" style="left:207px;top:641px;width:46px;height:33px;background:#4a4a4a;border:1px solid #8a8a8a"></div>
<div class="a" style="left:261px;top:641px;width:50px;height:33px;background:#3d3d3d;border:1px solid #5a5a5a"></div>
<div class="a" style="left:255px;top:641px;width:2px;height:33px;background:#9a9a9a"></div>
<svg style="left:59px;top:647px;" width="26" height="22" viewBox="0 0 26 22"><path d="M1 3 H9 L11 5 H25 V20 H1Z" fill="#e8b84a"/><path d="M1 7 H25 V20 H1Z" fill="#f7d87c"/><rect x="6" y="12" width="14" height="8" fill="#2a9ee0"/><rect x="9" y="15" width="8" height="5" fill="#b8e4f8"/></svg>
<svg style="left:111px;top:643px;" width="30" height="29" viewBox="0 0 30 29"><defs><radialGradient id="ffa" cx="55%" cy="30%" r="70%"><stop offset="0" stop-color="#ffe04a"/><stop offset="0.45" stop-color="#ff8a2a"/><stop offset="0.8" stop-color="#f0344a"/><stop offset="1" stop-color="#c0206a"/></radialGradient></defs>
<path d="M15 28 C7 28 2 22 2 15 C2 10 4 7 6 5 C6 8 7 9 8 10 C9 6 12 3 17 1 C16 4 17 6 20 8 C24 10 27 13 27 17 C27 23 22 28 15 28Z" fill="url(#ffa)"/>
<circle cx="15" cy="16" r="6" fill="#7a3ad0"/><path d="M9 14 C11 11 15 10 18 12 C15 12 13 14 13 16Z" fill="#ff9a30"/></svg>
<svg style="left:162px;top:645px;" width="31" height="26" viewBox="0 0 31 26"><circle cx="17" cy="13" r="12.5" fill="#ed6c47"/><path d="M17 0.5 A12.5 12.5 0 0 1 29.5 13 H17Z" fill="#ff8f6b"/><path d="M17 13 H29.5 A12.5 12.5 0 0 1 17 25.5Z" fill="#d35230"/><rect x="1" y="5" width="15" height="16" rx="1.5" fill="#c43e1c"/><text x="8.5" y="17.5" font-family="Liberation Sans" font-weight="bold" font-size="12" fill="#fff" text-anchor="middle">P</text></svg>
<svg style="left:215px;top:644px;" width="28" height="28" viewBox="0 0 28 28"><circle cx="14" cy="14" r="13" fill="#2d8cff"/><rect x="6" y="9.5" width="11" height="9" rx="2" fill="#fff"/><path d="M18 12.5 L22.5 9.5 V18.5 L18 15.5Z" fill="#fff"/></svg>
<svg style="left:272px;top:645px;" width="29" height="26" viewBox="0 0 29 26"><rect x="8" y="1" width="20" height="24" rx="1.5" fill="#2b7cd3"/><rect x="8" y="1" width="20" height="6" fill="#41a5ee"/><rect x="8" y="13" width="20" height="6" fill="#185abd"/><rect x="8" y="19" width="20" height="6" fill="#103f91"/><rect x="1" y="6" width="15" height="15" rx="1.5" fill="#185abd"/><text x="8.5" y="17.5" font-family="Liberation Sans" font-weight="bold" font-size="11" fill="#fff" text-anchor="middle">W</text></svg>
<svg style="left:981px;top:655px;" width="7" height="5" viewBox="0 0 7 5"><path d="M0.5 4.5 L3.5 1 L6.5 4.5Z" fill="#e6e6e6"/></svg>
<svg style="left:999px;top:652px;" width="15" height="10" viewBox="0 0 15 10"><rect x="0.5" y="0.5" width="3" height="3" fill="#e6e6e6"/><rect x="2.5" y="2.5" width="10.5" height="7" fill="none" stroke="#e6e6e6" stroke-width="1"/><rect x="4" y="4" width="7.5" height="4" fill="#e6e6e6"/><rect x="13" y="4.5" width="1.5" height="3" fill="#e6e6e6"/></svg>
<svg style="left:1021px;top:650px;" width="14" height="14" viewBox="0 0 14 14"><path d="M1 13 A12 12 0 0 1 13 1 M4 13 A9 9 0 0 1 13 4 M7 13 A6 6 0 0 1 13 7" fill="none" stroke="#e6e6e6" stroke-width="1.2"/><circle cx="11.5" cy="11.5" r="1.8" fill="#e6e6e6"/></svg>
<svg style="left:1041px;top:650px;" width="14" height="14" viewBox="0 0 14 14"><path d="M1 5 H3.5 L7 1.5 V12.5 L3.5 9 H1Z" fill="none" stroke="#e6e6e6" stroke-width="1.1"/><path d="M9 4.5 C10.5 6 10.5 8 9 9.5 M11 2.5 C13.5 5 13.5 9 11 11.5" fill="none" stroke="#e6e6e6" stroke-width="1.1"/></svg>
<svg style="left:1157px;top:650px;" width="24" height="20" viewBox="0 0 24 20"><path d="M1 1 H17 V13 H7 L4 16 V13 H1Z" fill="#e6e6e6"/><path d="M4 4.5 H14 M4 7.5 H14 M4 10.5 H10" stroke="#1c1d21" stroke-width="1.1"/><circle cx="17" cy="14" r="6" fill="#1c1d21" stroke="#e6e6e6" stroke-width="1.1"/></svg>
<div class="t" style="left:1172.50px;top:660.35px;font-size:9px;color:#e6e6e6;transform:scaleX(0.6607);-webkit-text-stroke:0.25px #e6e6e6;">1</div>
<div class="a" style="left:11px;top:56px;width:4px;height:566px;background:linear-gradient(90deg,rgba(176,204,232,0) 0,rgba(176,204,232,0.9) 100%)"></div>
<div class="a" style="left:345px;top:56px;width:4px;height:566px;background:linear-gradient(90deg,rgba(170,186,200,0.95) 0,rgba(180,192,200,0.6) 100%)"></div>
<div class="a" style="left:15px;top:622px;width:330px;height:1px;background:rgba(150,190,230,0.8)"></div>
<div class="a" style="left:15px;top:4px;width:330px;height:618px;background:#1b1b1b;border:1px solid #0e1824;border-right:3px solid #0e1824"></div>
<div class="a" style="left:16px;top:608px;width:326px;height:3px;background:#24180f"></div>
<div class="a" style="left:16px;top:611px;width:326px;height:5px;background:#141b22"></div>
<div class="a" style="left:16px;top:616px;width:326px;height:3px;background:#22170e"></div>
<div class="a" style="left:16px;top:619px;width:326px;height:2px;background:#0b1826"></div>
<div class="a" style="left:16px;top:5px;width:328px;height:27px;background:#0f72e6"></div>
<svg style="left:23px;top:11px;" width="14" height="14" viewBox="0 0 14 14"><circle cx="7" cy="7" r="6.5" fill="#5a9ef5"/><rect x="3" y="5" width="5.5" height="4.5" rx="1" fill="#fff"/><path d="M9 6.2 L11.2 5 V9.5 L9 8.3Z" fill="#fff"/></svg>
<div class="t" style="left:41.50px;top:13.10px;font-size:10px;color:#e6f2ff;transform:scaleX(1.0335);-webkit-text-stroke:0.3px #e6f2ff;">Zoom Конференция</div>
<svg style="left:239px;top:18px;" width="10" height="1.4" viewBox="0 0 10 1.4"><rect x="0" y="0" width="9.5" height="1.3" fill="#e8f2ff"/></svg>
<svg style="left:279px;top:13px;" width="10" height="10" viewBox="0 0 10 10"><rect x="0.6" y="0.6" width="8.2" height="8.2" fill="none" stroke="#e8f2ff" stroke-width="1.2"/></svg>
<svg style="left:319px;top:13px;" width="10" height="10" viewBox="0 0 10 10"><path d="M0.5 0.5 L9 9 M9 0.5 L0.5 9" stroke="#e8f2ff" stroke-width="1.2"/></svg>
<div class="a" style="left:21px;top:284px;width:162px;height:86px;background:#f1efee;overflow:hidden"><div class="a" style="left:0;top:0;width:162px;height:5px;background:#c9492a"></div><div class="a" style="left:10px;top:1px;width:10px;height:3px;background:#e4927e;filter:blur(0.4px)"></div><div class="a" style="left:0;top:5px;width:162px;height:14px;background:#f6f3f2"></div><div class="a" style="left:3px;top:7px;width:155px;height:2px;background:linear-gradient(90deg,#ecd9d4,#dfe3ea 30%,#e3e8df 50%,#e8e1e8 70%,#e6e9ee);filter:blur(0.4px)"></div><div class="a" style="left:3px;top:11px;width:150px;height:4px;background:linear-gradient(90deg,#efe6e4,#e9ecef 40%,#ecefe8 60%,#efe9ee);filter:blur(0.6px)"></div><div class="a" style="left:0;top:18px;width:162px;height:1px;background:#e0dcdb"></div><div class="a" style="left:23px;top:19px;width:14px;height:62px;background:#e4e4e9"></div><div class="a" style="left:147px;top:19px;width:15px;height:62px;background:#e4e4e9"></div><div class="a" style="left:3px;top:20px;width:17px;height:9px;background:linear-gradient(90deg,#6d6a64,#4f5a48 60%,#45503e);filter:blur(0.4px)"></div><div class="a" style="left:3px;top:31px;width:17px;height:9px;background:linear-gradient(90deg,#8a8680,#6a645c 60%,#504a40);filter:blur(0.4px)"></div><div class="a" style="left:3px;top:43px;width:17px;height:9px;background:linear-gradient(90deg,#9a9894,#7a7670 50%,#4a3c30);filter:blur(0.4px)"></div><div class="a" style="left:3px;top:54px;width:17px;height:10px;background:linear-gradient(90deg,#3a3028,#8a6a40 50%,#d4a840);filter:blur(0.4px)"></div><div class="a" style="left:3px;top:66px;width:17px;height:10px;background:linear-gradient(90deg,#8a8278,#6a6258 60%,#5a5248);filter:blur(0.4px)"></div><div class="a" style="left:3px;top:78px;width:17px;height:5px;background:#7a7670;filter:blur(0.4px)"></div><div class="a" style="left:37px;top:19px;width:110px;height:62px;background:linear-gradient(90deg,#5e5a58,#56524f 50%,#5a5654)"></div><div class="a" style="left:64px;top:23px;width:48px;height:1.5px;background:rgba(215,205,200,0.42);filter:blur(0.7px)"></div><div class="a" style="left:60px;top:27px;width:56px;height:1.5px;background:rgba(215,205,200,0.42);filter:blur(0.7px)"></div><div class="a" style="left:72px;top:31px;width:32px;height:1.5px;background:rgba(215,205,200,0.42);filter:blur(0.7px)"></div><div class="a" style="left:42px;top:37px;width:20px;height:1.5px;background:rgba(220,160,160,0.45);filter:blur(0.7px)"></div><div class="a" style="left:42px;top:40px;width:22px;height:1.5px;background:rgba(215,205,200,0.42);filter:blur(0.7px)"></div><div class="a" style="left:44px;top:43px;width:18px;height:1.5px;background:rgba(215,205,200,0.42);filter:blur(0.7px)"></div><div class="a" style="left:42px;top:50px;width:22px;height:1.5px;background:rgba(215,205,200,0.42);filter:blur(0.7px)"></div><div class="a" style="left:42px;top:53px;width:20px;height:1.5px;background:rgba(220,160,160,0.45);filter:blur(0.7px)"></div><div class="a" style="left:44px;top:56px;width:18px;height:1.5px;background:rgba(215,205,200,0.42);filter:blur(0.7px)"></div><div class="a" style="left:76px;top:39px;width:36px;height:1.5px;background:rgba(215,205,200,0.42);filter:blur(0.7px)"></div><div class="a" style="left:72px;top:43px;width:42px;height:1.5px;background:rgba(215,205,200,0.42);filter:blur(0.7px)"></div><div class="a" style="left:78px;top:47px;width:30px;height:1.5px;background:rgba(230,150,150,0.5);filter:blur(0.7px)"></div><div class="a" style="left:78px;top:50px;width:30px;height:1.5px;background:rgba(230,150,150,0.5);filter:blur(0.7px)"></div><div class="a" style="left:42px;top:61px;width:22px;height:1.5px;background:rgba(220,160,160,0.45);filter:blur(0.7px)"></div><div class="a" style="left:42px;top:64px;width:22px;height:1.5px;background:rgba(215,205,200,0.42);filter:blur(0.7px)"></div><div class="a" style="left:42px;top:67px;width:20px;height:1.5px;background:rgba(215,205,200,0.42);filter:blur(0.7px)"></div><div class="a" style="left:44px;top:70px;width:16px;height:1.5px;background:rgba(215,205,200,0.42);filter:blur(0.7px)"></div><div class="a" style="left:70px;top:65px;width:26px;height:1.5px;background:rgba(215,205,200,0.42);filter:blur(0.7px)"></div><div class="a" style="left:68px;top:68px;width:30px;height:1.5px;background:rgba(215,205,200,0.42);filter:blur(0.7px)"></div><div class="a" style="left:70px;top:71px;width:26px;height:1.5px;background:rgba(215,205,200,0.42);filter:blur(0.7px)"></div><div class="a" style="left:72px;top:74px;width:22px;height:1.5px;background:rgba(215,205,200,0.42);filter:blur(0.7px)"></div><div class="a" style="left:100px;top:67px;width:18px;height:1.5px;background:rgba(230,150,150,0.5);filter:blur(0.7px)"></div><div class="a" style="left:100px;top:70px;width:18px;height:1.5px;background:rgba(230,150,150,0.5);filter:blur(0.7px)"></div><div class="a" style="left:112px;top:53px;width:16px;height:1.5px;background:rgba(215,205,200,0.42);filter:blur(0.7px)"></div><div class="a" style="left:110px;top:56px;width:18px;height:1.5px;background:rgba(215,205,200,0.42);filter:blur(0.7px)"></div><div class="a" style="left:112px;top:59px;width:16px;height:1.5px;background:rgba(215,205,200,0.42);filter:blur(0.7px)"></div><div class="a" style="left:116px;top:18px;width:38px;height:58px;border-radius:50%;background:radial-gradient(ellipse at 55% 42%,rgba(48,52,46,0.95) 0%,rgba(38,56,34,0.95) 25%,rgba(58,82,48,0.92) 48%,rgba(62,80,52,0.55) 62%,rgba(90,86,84,0) 72%);filter:blur(0.8px)"></div><div class="a" style="left:121px;top:24px;width:3px;height:3px;background:#b8c8a0;filter:blur(0.5px)"></div><div class="a" style="left:138px;top:22px;width:3px;height:3px;background:#c0d0a8;filter:blur(0.5px)"></div><div class="a" style="left:143px;top:44px;width:2px;height:3px;background:#b0c098;filter:blur(0.5px)"></div><div class="a" style="left:119px;top:50px;width:3px;height:3px;background:#a8b890;filter:blur(0.5px)"></div><div class="a" style="left:126px;top:62px;width:16px;height:18px;background:radial-gradient(ellipse at 50% 60%,rgba(235,235,235,0.85) 0%,rgba(200,200,200,0.5) 50%,rgba(90,86,84,0) 80%);filter:blur(0.6px)"></div><div class="a" style="left:147px;top:19px;width:15px;height:62px;background:#e4e4e9"></div><div class="a" style="left:37px;top:14px;width:125px;height:5px;background:#f3f0f0;border-bottom:1px solid #e0dcdb"></div><div class="a" style="left:0;top:81px;width:162px;height:5px;background:#f1efee"></div></div>
<div class="a" style="left:193px;top:285px;width:146px;height:82px;background:#d8cdb0;overflow:hidden"><div class="a" style="left:0;top:0;width:40px;height:82px;background:linear-gradient(#dcd4bc,#d4c8a6 50%,#bcae84)"></div><div class="a" style="left:0;top:0;width:4px;height:82px;background:#b8a878"></div><div class="a" style="left:4px;top:38px;width:19px;height:36px;background:#6a5a34;filter:blur(0.5px)"></div><div class="a" style="left:22px;top:38px;width:13px;height:17px;background:#d0c8b0;filter:blur(0.5px)"></div><div class="a" style="left:22px;top:55px;width:13px;height:20px;background:#6e603a;filter:blur(0.5px)"></div><div class="a" style="left:33px;top:0;width:15px;height:82px;background:linear-gradient(90deg,#c4cbcf,#d6dcdf 40%,#b8c0c6);filter:blur(0.6px)"></div><div class="a" style="left:48px;top:0;width:55px;height:58px;background:repeating-linear-gradient(90deg,#a3a7aa 0 3px,#b5b8bb 3px 5px);filter:blur(0.6px)"></div><div class="a" style="left:40px;top:48px;width:8px;height:8px;background:#2a2c2c;border-radius:50%;filter:blur(0.8px)"></div><div class="a" style="left:46px;top:52px;width:7px;height:8px;background:#343636;border-radius:50%;filter:blur(0.8px)"></div><div class="a" style="left:41px;top:60px;width:12px;height:10px;background:#3a3c3a;border-radius:40%;filter:blur(1px)"></div><div class="a" style="left:103px;top:0;width:43px;height:82px;background:linear-gradient(90deg,#eef2f4,#fbfcfd 30%,#f6f8f9 65%,#dfe6ea 85%,#f2f5f6)"></div><div class="a" style="left:52px;top:10px;width:52px;height:74px;border-radius:48% 48% 8% 8%/30% 30% 8% 8%;background:linear-gradient(90deg,#c89040 0%,#a86a2c 18%,#6a4224 40%,#3e2a1e 65%,#2c2220 85%,#4a3626 100%);filter:blur(0.9px)"></div><div class="a" style="left:62px;top:17px;width:30px;height:50px;border-radius:42% 42% 48% 48%;background:linear-gradient(90deg,#e29440 0%,#d8842e 35%,#b05e24 60%,#6a3822 85%,#3a2420 100%);filter:blur(1px)"></div><div class="a" style="left:66px;top:34px;width:10px;height:4px;background:rgba(70,30,15,0.35);border-radius:50%;filter:blur(1.2px)"></div><div class="a" style="left:80px;top:34px;width:9px;height:4px;background:rgba(50,25,15,0.4);border-radius:50%;filter:blur(1.2px)"></div><div class="a" style="left:70px;top:50px;width:12px;height:4px;background:rgba(120,30,20,0.35);border-radius:50%;filter:blur(1.2px)"></div><div class="a" style="left:66px;top:63px;width:26px;height:20px;background:#3a2226;filter:blur(1px)"></div><div class="a" style="left:101px;top:60px;width:32px;height:26px;border-radius:45% 45% 0 0;background:#2a282c;filter:blur(0.7px)"></div></div>
<div class="a" style="left:193px;top:352px;width:87px;height:15px;background:rgba(20,20,20,0.55)"></div>
<svg style="left:196px;top:354px;" width="13" height="10" viewBox="0 0 13 10"><rect x="0.5" y="6" width="2" height="4" fill="#e8e04a"/><rect x="3.8" y="4" width="2" height="6" fill="#e8e04a"/><rect x="7.1" y="2" width="2" height="8" fill="#e8e04a"/><rect x="10.4" y="0" width="2" height="10" fill="#e8e04a"/></svg>
<div class="t" style="left:212.40px;top:354.03px;font-size:11.5px;color:#f2f2f2;transform:scaleX(0.9866);-webkit-text-stroke:0.25px #f2f2f2;">Дарина Гнап</div>
</body></html>
